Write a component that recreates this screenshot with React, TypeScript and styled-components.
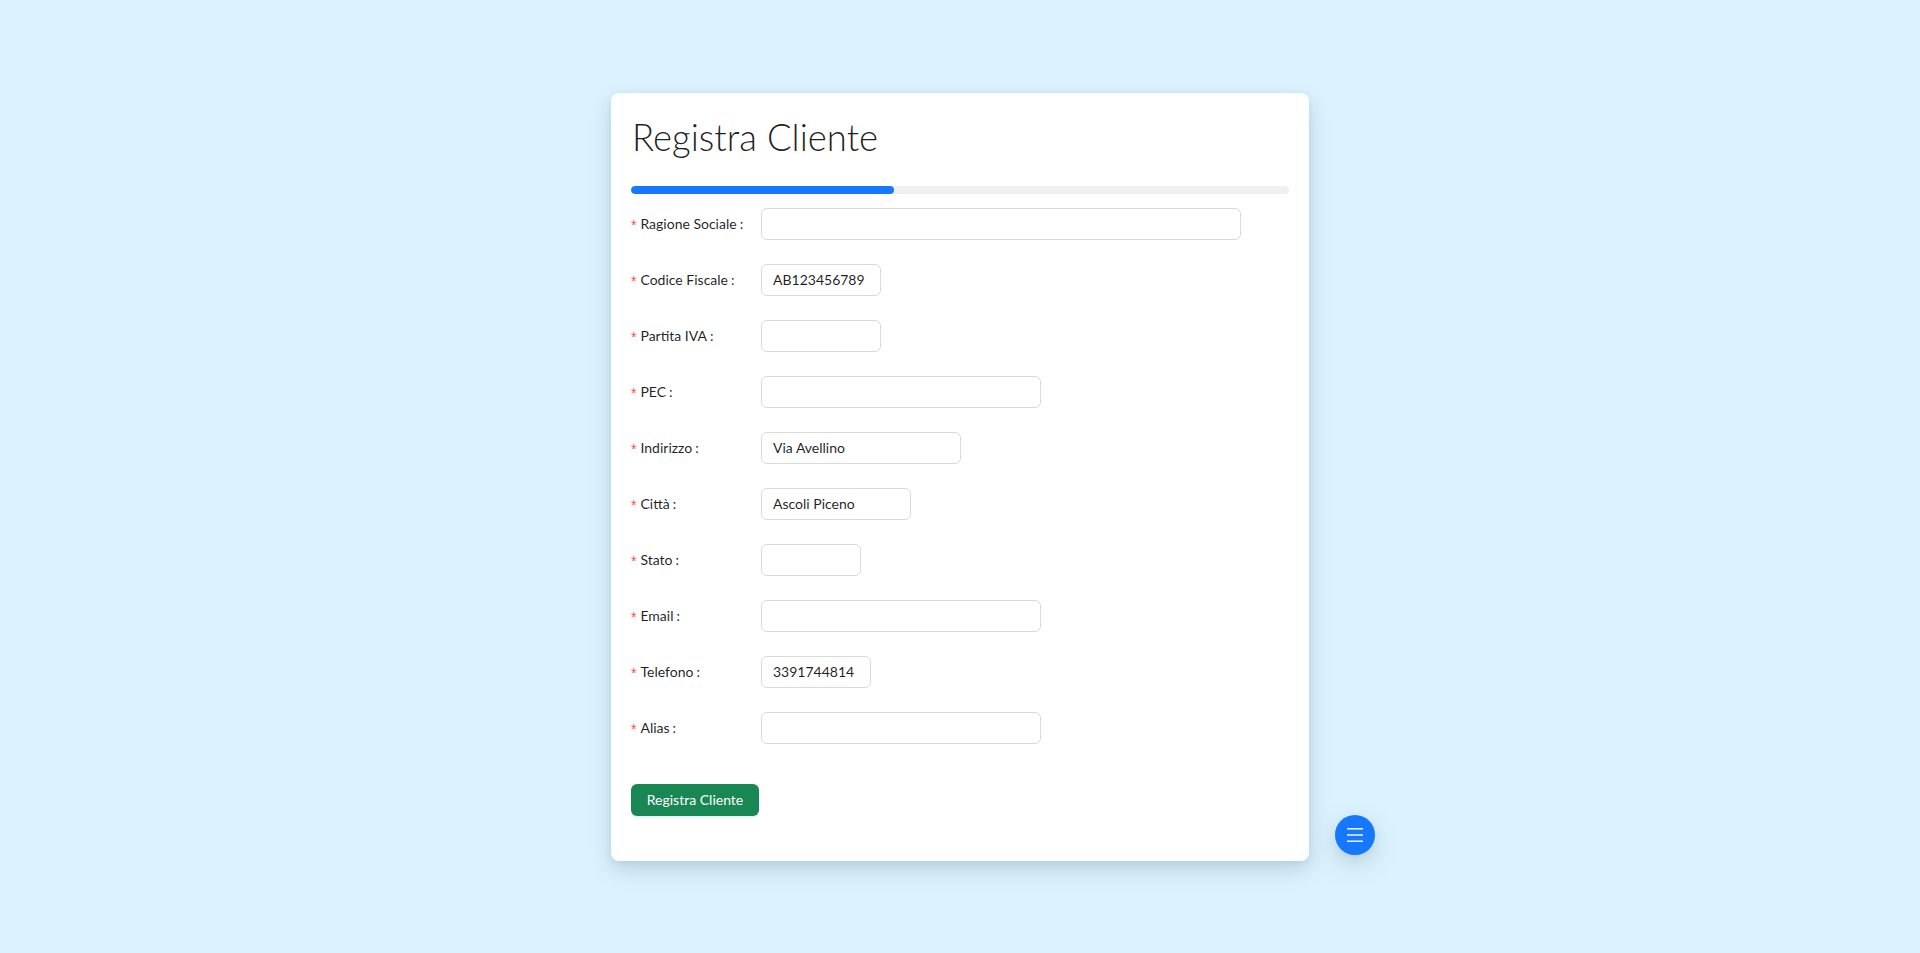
import React from "react";
import styled, { createGlobalStyle } from "styled-components";

const GlobalStyle = createGlobalStyle`
  html, body { margin: 0; padding: 0; }
  body {
    background: #daf3fe;
    font-family: Lato, "Open Sans", "Liberation Sans", sans-serif;
    color: rgba(0, 0, 0, 0.88);
  }
  * { box-sizing: border-box; }
`;

const Page = styled.div`
  min-height: 100vh;
  display: flex;
  align-items: center;
  justify-content: center;
`;

const Card = styled.div`
  position: relative;
  width: 698px;
  background: #ffffff;
  border-radius: 8px;
  padding: 20px 20px 21px 20px;
  box-shadow: 0 8px 22px rgba(0, 40, 70, 0.16), 0 2px 6px rgba(0, 40, 70, 0.06);
`;

const Title = styled.h1`
  margin: 1px 0 0 0;
  font-family: Lato, "Open Sans", sans-serif;
  font-weight: 300;
  font-size: 36.5px;
  line-height: 46px;
  color: rgba(0, 0, 0, 0.88);
  padding-left: 1px;
`;

const ProgressTrack = styled.div`
  margin-top: 26px;
  height: 8px;
  border-radius: 100px;
  background: #f0f0f0;
  overflow: hidden;
`;

const ProgressFill = styled.div`
  height: 100%;
  border-radius: 100px;
  background: #1677ff;
`;

const Form = styled.form`
  margin-top: 14px;
  display: flex;
  flex-direction: column;
`;

const Row = styled.div`
  display: flex;
  align-items: center;
  margin-bottom: 24px;
`;

const Label = styled.label`
  flex: none;
  width: 130px;
  height: 32px;
  display: flex;
  align-items: center;
  font-size: 14px;
  color: rgba(0, 0, 0, 0.88);
  white-space: nowrap;
  &::after {
    content: ":";
    margin: 0 8px 0 3px;
  }
`;

const Required = styled.span`
  color: #ff4d4f;
  font-family: "Liberation Sans", sans-serif;
  font-size: 14px;
  margin-right: 4px;
  line-height: 1;
  padding-top: 2px;
`;

const Input = styled.input<{ $w: number }>`
  width: ${(p) => p.$w}px;
  height: 32px;
  padding: 4px 11px;
  border: 1px solid #d9d9d9;
  border-radius: 6px;
  font-family: Lato, "Open Sans", sans-serif;
  font-size: 14px;
  color: rgba(0, 0, 0, 0.88);
  background: #fff;
  outline: none;
`;

const ButtonRow = styled.div`
  margin-top: 16px;
  margin-bottom: 24px;
  display: flex;
`;

const SubmitButton = styled.button`
  height: 32px;
  padding: 0 15px;
  width: 128px;
  border: none;
  border-radius: 6px;
  background: #198754;
  color: #fff;
  font-family: Lato, "Open Sans", sans-serif;
  font-size: 14px;
  box-shadow: 0 2px 0 rgba(5, 145, 255, 0.1);
  cursor: pointer;
`;

const FloatButton = styled.button`
  position: absolute;
  right: -66px;
  bottom: 6px;
  width: 40px;
  height: 40px;
  border-radius: 50%;
  border: none;
  background: #1677ff;
  display: flex;
  align-items: center;
  justify-content: center;
  box-shadow: 0 6px 16px rgba(0, 0, 0, 0.08), 0 3px 6px -4px rgba(0, 0, 0, 0.12),
    0 9px 28px 8px rgba(0, 0, 0, 0.05);
  cursor: pointer;
  padding: 0;
`;

const fields: { label: string; width: number; value?: string }[] = [
  { label: "Ragione Sociale", width: 480 },
  { label: "Codice Fiscale", width: 120, value: "AB123456789" },
  { label: "Partita IVA", width: 120 },
  { label: "PEC", width: 280 },
  { label: "Indirizzo", width: 200, value: "Via Avellino" },
  { label: "Città", width: 150, value: "Ascoli Piceno" },
  { label: "Stato", width: 100 },
  { label: "Email", width: 280 },
  { label: "Telefono", width: 110, value: "3391744814" },
  { label: "Alias", width: 280 },
];

export default function App() {
  return (
    <>
      <GlobalStyle />
      <Page>
        <Card>
          <Title>Registra Cliente</Title>
          <ProgressTrack>
            <ProgressFill style={{ width: "40%" }} />
          </ProgressTrack>
          <Form onSubmit={(e) => e.preventDefault()}>
            {fields.map((f) => (
              <Row key={f.label}>
                <Label>
                  <Required>*</Required>
                  {f.label}
                </Label>
                <Input $w={f.width} defaultValue={f.value ?? ""} />
              </Row>
            ))}
            <ButtonRow>
              <SubmitButton type="submit">Registra Cliente</SubmitButton>
            </ButtonRow>
          </Form>
          <FloatButton type="button" aria-label="menu">
            <svg width="16" height="16" viewBox="0 0 16 16">
              <g stroke="#fff" strokeWidth="1.4" strokeLinecap="butt">
                <line x1="0" y1="1.8" x2="16" y2="1.8" />
                <line x1="0" y1="8" x2="16" y2="8" />
                <line x1="0" y1="14.2" x2="16" y2="14.2" />
              </g>
            </svg>
          </FloatButton>
        </Card>
      </Page>
    </>
  );
}
